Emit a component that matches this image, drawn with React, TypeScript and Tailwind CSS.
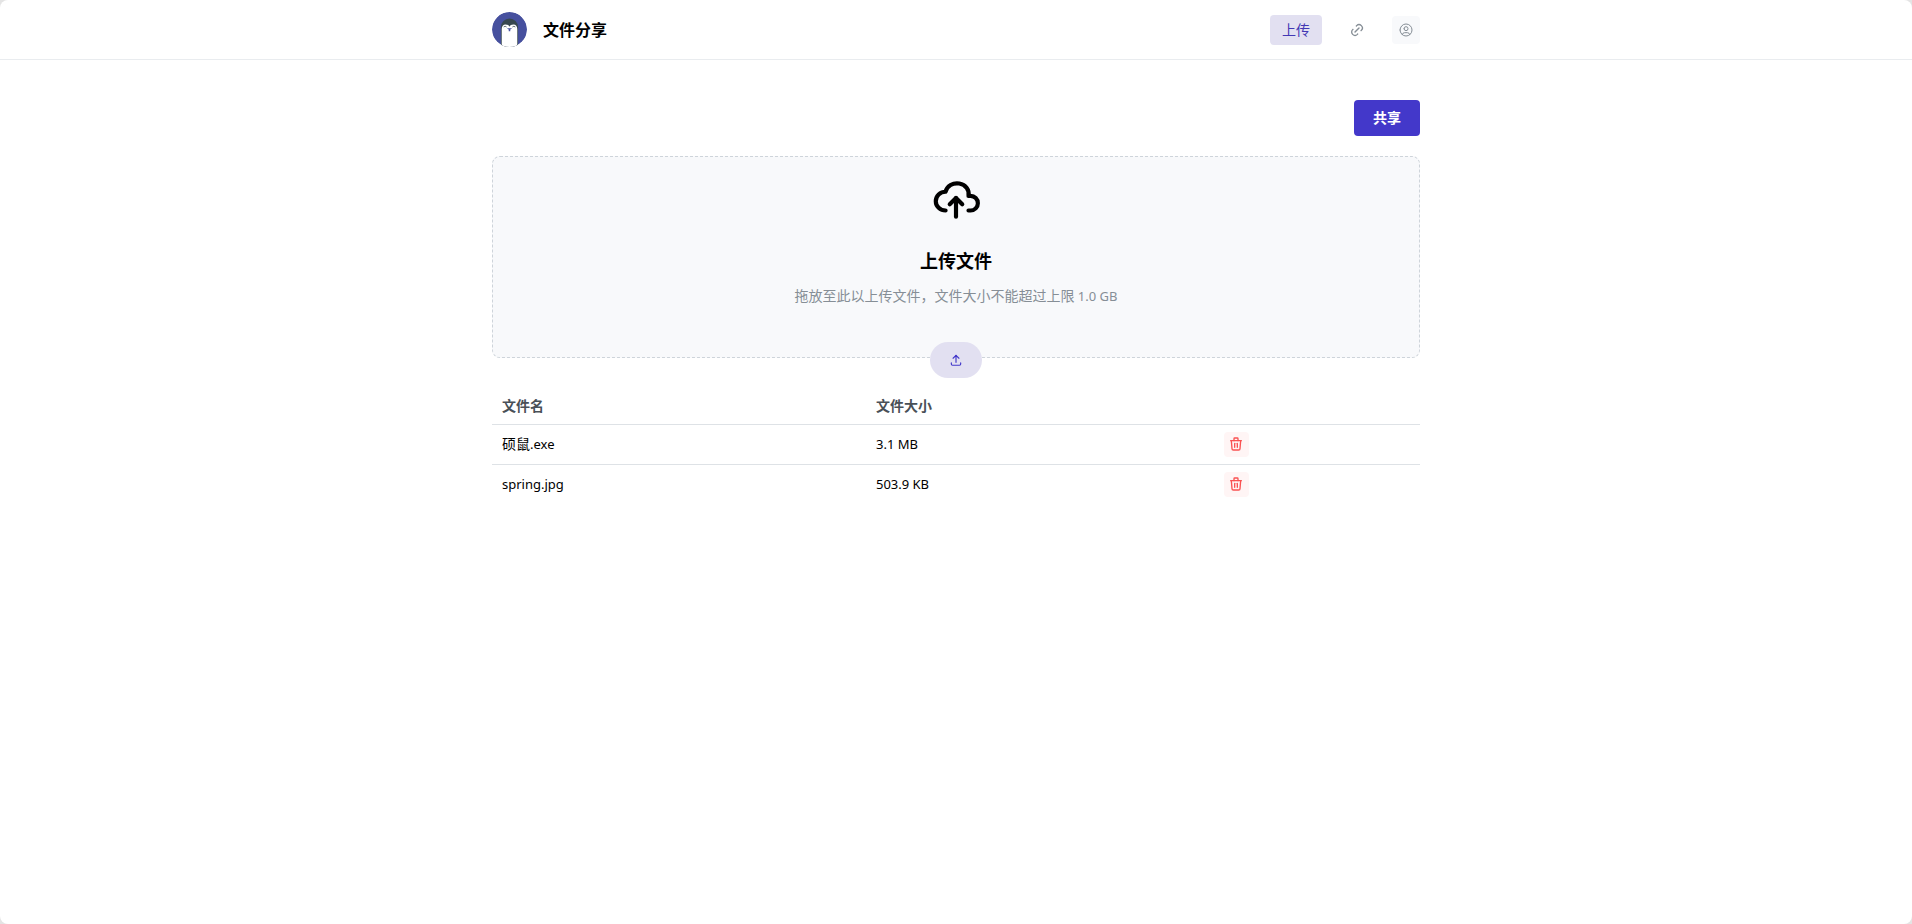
import type { ReactNode } from 'react';
import { TbCloudUpload, TbLink, TbTrash, TbUpload, TbUserCircle } from 'react-icons/tb';

type FileEntry = { name: string; size: string };

const files: FileEntry[] = [
  { name: '硕鼠.exe', size: '3.1 MB' },
  { name: 'spring.jpg', size: '503.9 KB' },
];

function PenguinLogo() {
  return (
    <svg viewBox="0 0 36 36" className="size-[35px] rounded-full" aria-hidden="true">
      <circle cx="18" cy="18" r="18" fill="#46509e" />
      <path d="M9.200 36V15.500a8.800 8.800 0 0 1 17.600 0V36Z" fill="#37474f" />
      <path d="M10 36V17.500c0-2.700 1.500-4.700 4-4.700 2 0 3.400.8 4 2.400.6-1.600 2-2.400 4-2.400 2.500 0 4 2 4 4.700V36Z" fill="#fff" />
      <path d="M12 15.400q1.500-1.400 3 0M21 15.400q1.500-1.400 3 0" stroke="#37474f" strokeWidth=".8" fill="none" />
      <path d="M15.200 16.800h5.600L18.800 18v1.800h-1.600V18Z" fill="#46509e" />
    </svg>
  );
}

// Latin runs are set one step smaller so they balance with the Chinese glyphs.
function Mixed({ text }: { text: string }) {
  return (
    <>
      {text.split(/([\x20-\x7e]+)/).filter(Boolean).map((run, i) => (
        <span key={i} className={/^[\x20-\x7e]/.test(run) ? 'text-[13px]' : 'text-sm'}>{run}</span>
      ))}
    </>
  );
}

function Head({ children = null }: { children?: ReactNode }) {
  return <th className="px-2.5 text-left font-bold text-[#495057]">{children}</th>;
}

export default function App() {
  return (
    <div className="min-h-screen bg-[#e4e4e4] font-['Noto_Sans','Noto_Sans_CJK_SC',sans-serif] text-sm text-black">
      <div className="min-h-screen rounded-lg bg-white">
        <header className="h-[60px] border-b border-[#e9ecef]">
          <div className="mx-auto flex h-full max-w-[960px] items-center justify-between px-4">
            <a href="#" className="flex items-center gap-4">
              <PenguinLogo />
              <span className="text-base font-bold">文件分享</span>
            </a>
            <nav className="flex items-center gap-4">
              <a href="#upload" className="flex h-[30px] items-center rounded bg-[#e2e0f1] px-3 text-[#4338b4]">上传</a>
              <a href="#links" aria-label="链接" className="flex h-[30px] items-center rounded px-[11px] text-[#868e96]">
                <TbLink size={16} />
              </a>
              <button type="button" aria-label="账户" className="flex size-7 items-center justify-center rounded bg-[#f8f9fb] text-[#868e96]">
                <TbUserCircle size={16} strokeWidth={1.5} />
              </button>
            </nav>
          </div>
        </header>
        <main className="mx-auto max-w-[960px] px-4 pt-10">
          <div className="flex justify-end">
            <button type="button" className="h-9 rounded bg-[#4338ca] px-[19px] font-semibold text-white">共享</button>
          </div>
          <section className="mt-5 flex flex-col items-center rounded-lg border border-dashed border-[#ced4da] bg-[#f8f9fb] px-4 pt-4">
            <TbCloudUpload size={50} />
            <h1 className="mt-6 text-lg leading-7 font-bold">上传文件</h1>
            <p className="mt-2.5 leading-[22px] text-[#868e96]">
              <Mixed text="拖放至此以上传文件，文件大小不能超过上限 1.0 GB" />
            </p>
            <button type="button" aria-label="选择文件" className="mt-[35px] -mb-[21px] flex h-9 w-[52px] items-center justify-center rounded-full bg-[#e2e0f1] text-[#4338ca]">
              <TbUpload size={14} />
            </button>
          </section>
          <table className="mt-[30px] w-full table-fixed border-collapse">
            <colgroup>
              <col className="w-[40.3%]" />
              <col className="w-[37.5%]" />
              <col />
            </colgroup>
            <thead>
              <tr className="h-9">
                <Head>文件名</Head>
                <Head>文件大小</Head>
                <Head />
              </tr>
            </thead>
            <tbody>
              {files.map((file) => (
                <tr key={file.name} className="h-10 border-t border-[#dee2e6]">
                  <td className="px-2.5"><Mixed text={file.name} /></td>
                  <td className="px-2.5"><Mixed text={file.size} /></td>
                  <td className="px-2.5">
                    <button type="button" aria-label={`删除 ${file.name}`} className="flex size-[25px] items-center justify-center rounded bg-[#fff5f5] text-[#fa5252]">
                      <TbTrash size={16} />
                    </button>
                  </td>
                </tr>
              ))}
            </tbody>
          </table>
        </main>
      </div>
    </div>
  );
}
